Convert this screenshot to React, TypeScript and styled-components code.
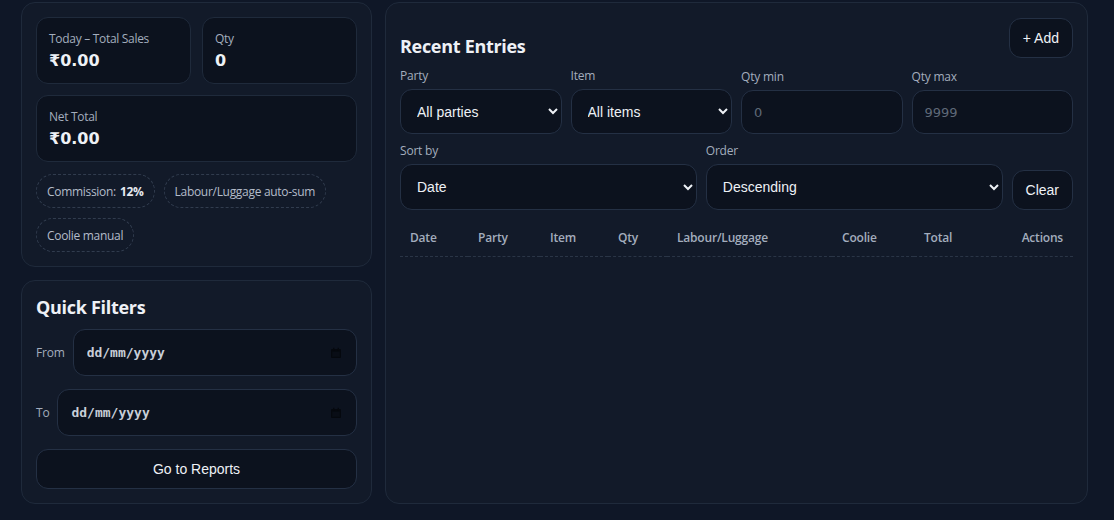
import styled, { createGlobalStyle } from "styled-components"

const GlobalStyle = createGlobalStyle`
  html, body {
    margin: 0;
    padding: 0;
    background: #0f1727;
  }
  body {
    font-family: "Open Sans", "Noto Sans", sans-serif;
    color: #e5e9f0;
  }
  * { box-sizing: border-box; }
`

const Page = styled.div`
  display: grid;
  grid-template-columns: 351px 1fr;
  gap: 13px;
  padding: 2px 26px 17px 21px;
  height: 520px;
`

const Column = styled.div`
  display: flex;
  flex-direction: column;
  gap: 13px;
`

const Card = styled.section<{ grow?: boolean }>`
  background: #121a29;
  border: 1px solid #1f2a3b;
  border-radius: 14px;
  padding: 14px;
  ${(p) => (p.grow ? "flex: 1;" : "")}
`

const StatGrid = styled.div`
  display: grid;
  grid-template-columns: 1fr 1fr;
  gap: 11px;
`

const StatBox = styled.div<{ wide?: boolean }>`
  background: #0c121e;
  border: 1px solid #1f2a3b;
  border-radius: 12px;
  height: 67px;
  padding: 13px 12px 0;
  ${(p) => (p.wide ? "grid-column: 1 / span 2;" : "")}
`

const StatLabel = styled.div`
  font-size: 12px;
  letter-spacing: -0.3px;
  color: #a3adbd;
  line-height: 16px;
`

const StatValue = styled.div`
  font-family: "DejaVu Sans", sans-serif;
  font-weight: 700;
  font-size: 16px;
  color: #eef1f6;
  line-height: 22px;
  margin-top: 3px;
`

const Chips = styled.div`
  display: flex;
  flex-wrap: wrap;
  gap: 10px 9px;
  margin-top: 12px;
`

const Chip = styled.span`
  display: inline-flex;
  align-items: center;
  height: 34px;
  padding: 0 10px;
  border: 1px dashed #313c4e;
  border-radius: 999px;
  font-size: 12px;
  letter-spacing: -0.3px;
  color: #b4bcc9;
  b { color: #e5e9f0; margin-left: 4px; font-weight: 700; }
`

const Title = styled.h2`
  margin: 0;
  font-size: 18px;
  line-height: 24px;
  font-weight: 700;
  color: #eef1f6;
  letter-spacing: -0.3px;
`

const FilterRow = styled.label<{ first?: boolean }>`
  display: flex;
  align-items: center;
  gap: 8px;
  font-size: 12px;
  letter-spacing: -0.2px;
  color: #a3adbd;
  margin-top: ${(p) => (p.first ? "10px" : "13px")};
`

const ControlBase = `
  background: #0c121e;
  border: 1px solid #243044;
  border-radius: 12px;
  color: #eef1f6;
  font-family: "Liberation Sans", Arial, sans-serif;
  font-size: 14px;
  outline: none;
  width: 100%;
`

const DateBox = styled.div`
  position: relative;
  flex: 1;
  display: flex;
`

const DateInput = styled.input`
  ${ControlBase}
  height: 47px;
  padding: 0 30px 0 13px;
  font-family: "DejaVu Sans Mono", "Liberation Mono", monospace;
  font-size: 13px;
  font-weight: 700;
  &::placeholder { color: #c8ced8; opacity: 1; }
`

const CalendarIcon = styled.svg`
  position: absolute;
  right: 15px;
  top: 50%;
  transform: translateY(-50%);
  width: 12px;
  height: 12px;
  pointer-events: none;
`

const WideButton = styled.button`
  ${ControlBase}
  height: 40px;
  margin-top: 13px;
  cursor: pointer;
`

const SmallButton = styled.button`
  ${ControlBase}
  width: auto;
  height: 40px;
  padding: 0 13px;
  cursor: pointer;
`

const TopBar = styled.div`
  display: flex;
  justify-content: space-between;
  align-items: flex-end;
  padding-top: 1px;
`

const FieldGrid = styled.div<{ cols: string; mt: number }>`
  display: grid;
  grid-template-columns: ${(p) => p.cols};
  gap: 9px;
  align-items: end;
  margin-top: ${(p) => p.mt}px;
`

const Field = styled.label`
  display: flex;
  flex-direction: column;
  gap: 5px;
  font-size: 12px;
  line-height: 16px;
  letter-spacing: -0.2px;
  color: #a3adbd;
`

const Select = styled.select<{ tall?: boolean }>`
  ${ControlBase}
  height: ${(p) => (p.tall ? "46px" : "45px")};
  padding: 0 12px;
`

const NumInput = styled.input`
  ${ControlBase}
  height: 44px;
  padding: 0 12px;
  font-family: "DejaVu Sans", sans-serif;
  font-size: 13px;
  &::placeholder { color: #5f6978; }
`

const Table = styled.table`
  width: 100%;
  border-collapse: collapse;
  margin-top: 10px;
  table-layout: fixed;
`

const Th = styled.th<{ right?: boolean }>`
  text-align: ${(p) => (p.right ? "right" : "left")};
  font-size: 12px;
  line-height: 18px;
  font-weight: 600;
  letter-spacing: -0.2px;
  color: #a3adbd;
  padding: 9px 10px;
  border-bottom: 1px dashed #2a3546;
`

const columns: [string, number][] = [
  ["Date", 68],
  ["Party", 72],
  ["Item", 68],
  ["Qty", 59],
  ["Labour/Luggage", 165],
  ["Coolie", 82],
  ["Total", 80],
]

function DateField() {
  return (
    <DateBox>
      <DateInput placeholder="dd/mm/yyyy" />
      <CalendarIcon viewBox="0 0 12 12">
        <rect x="1" y="2" width="10" height="9" rx="1" fill="#05080e" />
        <rect x="2.2" y="4.6" width="7.6" height="5.2" fill="#0c121e" opacity="0.55" />
        <rect x="3" y="0.8" width="1.4" height="2.4" fill="#05080e" />
        <rect x="7.6" y="0.8" width="1.4" height="2.4" fill="#05080e" />
      </CalendarIcon>
    </DateBox>
  )
}

export default function App() {
  return (
    <>
      <GlobalStyle />
      <Page>
        <Column>
          <Card>
            <StatGrid>
              <StatBox>
                <StatLabel>Today – Total Sales</StatLabel>
                <StatValue>₹0.00</StatValue>
              </StatBox>
              <StatBox>
                <StatLabel>Qty</StatLabel>
                <StatValue>0</StatValue>
              </StatBox>
              <StatBox wide>
                <StatLabel>Net Total</StatLabel>
                <StatValue>₹0.00</StatValue>
              </StatBox>
            </StatGrid>
            <Chips>
              <Chip>
                Commission:<b>12%</b>
              </Chip>
              <Chip>Labour/Luggage auto-sum</Chip>
              <Chip>Coolie manual</Chip>
            </Chips>
          </Card>
          <Card grow>
            <Title>Quick Filters</Title>
            <FilterRow first>
              From
              <DateField />
            </FilterRow>
            <FilterRow>
              To
              <DateField />
            </FilterRow>
            <WideButton>Go to Reports</WideButton>
          </Card>
        </Column>
        <Card>
          <TopBar>
            <Title>Recent Entries</Title>
            <SmallButton>+ Add</SmallButton>
          </TopBar>
          <FieldGrid cols="1fr 1fr 1fr 1fr" mt={10}>
            <Field>
              Party
              <Select>
                <option>All parties</option>
              </Select>
            </Field>
            <Field>
              Item
              <Select>
                <option>All items</option>
              </Select>
            </Field>
            <Field>
              Qty min
              <NumInput placeholder="0" />
            </Field>
            <Field>
              Qty max
              <NumInput placeholder="9999" />
            </Field>
          </FieldGrid>
          <FieldGrid cols="1fr 1fr auto" mt={9}>
            <Field>
              Sort by
              <Select tall>
                <option>Date</option>
              </Select>
            </Field>
            <Field>
              Order
              <Select tall>
                <option>Descending</option>
              </Select>
            </Field>
            <SmallButton>Clear</SmallButton>
          </FieldGrid>
          <Table>
            <colgroup>
              {columns.map(([name, w]) => (
                <col key={name} style={{ width: w }} />
              ))}
              <col />
            </colgroup>
            <thead>
              <tr>
                {columns.map(([name]) => (
                  <Th key={name}>{name}</Th>
                ))}
                <Th right>Actions</Th>
              </tr>
            </thead>
          </Table>
        </Card>
      </Page>
    </>
  )
}
